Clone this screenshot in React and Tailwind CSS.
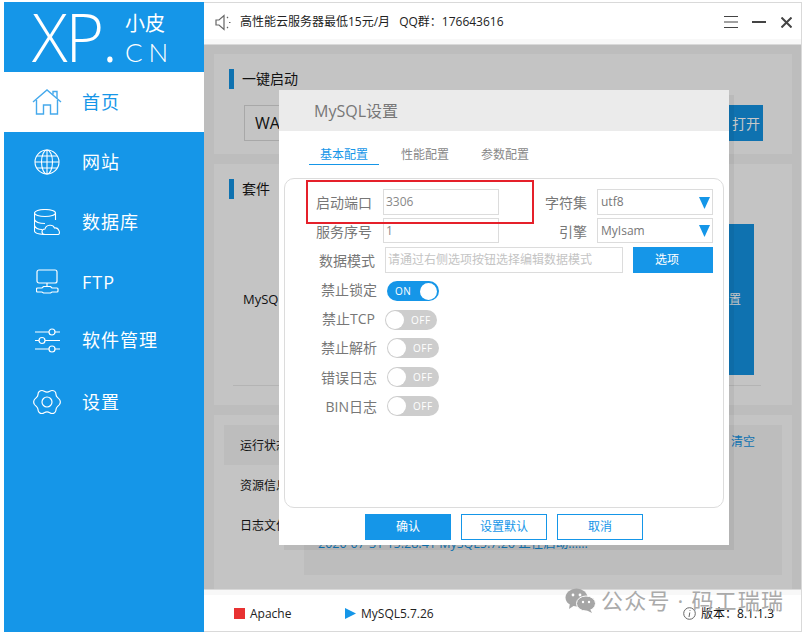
const FONT = "font-['Open_Sans','Noto_Sans_CJK_SC',sans-serif]";

function NavIcon({ name }) {
  const common = { fill: "none", stroke: "currentColor", strokeWidth: 1.1 };
  if (name === "home") return (
    <svg {...common} width="30" height="26" viewBox="0 0 30 26" strokeWidth="1.4" className="text-[#45a9ec]">
      <path d="M1 13 L15 1 L29 13" />
      <path d="M21 5.5 V2.5 H25 V9.5" />
      <path d="M4.5 11 V25 H11.5 V16 H18.5 V25 H25.5 V11" />
    </svg>
  );
  if (name === "globe") return (
    <svg {...common} width="26" height="26" viewBox="0 0 26 26">
      <circle cx="13" cy="13" r="12" />
      <ellipse cx="13" cy="13" rx="5.5" ry="12" />
      <path d="M13 1 V25 M1 13 H25 M3 7 H23 M3 19 H23" />
    </svg>
  );
  if (name === "db") return (
    <svg {...common} width="27" height="26" viewBox="0 0 27 26">
      <ellipse cx="11" cy="4" rx="10.5" ry="3.5" />
      <path d="M.5 4 V22 C.5 24 5 25.2 10 25.5 M21.5 4 V11 M.5 10.5 C1.5 13.5 7 14.5 11 14.5 M.5 16.5 C1.5 19.5 5 20.5 8 20.5" />
      <path d="M11 25.5 C7 25.5 7 20 11 20 C12 15.5 19 15 20.5 19 C25 18 27 25.5 24 25.5 Z" />
    </svg>
  );
  if (name === "ftp") return (
    <svg {...common} width="23" height="25" viewBox="0 0 23 25" strokeWidth="1.2">
      <rect x="1" y="1" width="20" height="13" rx="2" />
      <path d="M11 14 V17.5 M7.5 17.5 H14.5 L16 19 H21 A1 1 0 0 1 22 20 V22 A1 1 0 0 1 21 23 H16 L14.5 24 H7.5 L6 23 H1.5 A1 1 0 0 1 .5 22 V20 A1 1 0 0 1 1.5 19 H6 Z" />
    </svg>
  );
  if (name === "sliders") return (
    <svg {...common} width="25" height="25" viewBox="0 0 25 25" strokeWidth="1.2">
      <path d="M0 4 H14 M20 4 H25 M0 12.5 H4 M10 12.5 H25 M0 21 H14 M20 21 H25" />
      <circle cx="17" cy="4" r="3" />
      <circle cx="7" cy="12.5" r="3" />
      <circle cx="17" cy="21" r="3" />
    </svg>
  );
  return (
    <svg {...common} width="28" height="26" viewBox="0 0 28 26" strokeWidth="1.2">
      <path d="M9 1.5 C11 1.5 11.5 3.2 14 3.2 C16.5 3.2 17 1.5 19 1.5 C21 1.5 23 3 23 5.5 C23 8 25 8.5 26.5 10.5 C27.5 12 27.5 14 26.5 15.5 C25 17.5 23 18 23 20.5 C23 23 21 24.5 19 24.5 C17 24.5 16.5 22.8 14 22.8 C11.5 22.8 11 24.5 9 24.5 C7 24.5 5 23 5 20.5 C5 18 3 17.5 1.5 15.5 C.5 14 .5 12 1.5 10.5 C3 8.5 5 8 5 5.5 C5 3 7 1.5 9 1.5 Z" />
      <circle cx="14" cy="13" r="5" />
    </svg>
  );
}

const NAV = [
  ["home", "首页", true, ""],
  ["globe", "网站", false, ""],
  ["db", "数据库", false, "pb-[1px]"],
  ["ftp", "FTP", false, "pb-[1px]"],
  ["sliders", "软件管理", false, "pb-[4px]"],
  ["gear", "设置", false, ""],
];

function Sidebar() {
  return (
    <aside className="w-[200px] shrink-0 bg-[#1596e8] text-white">
      <div className="h-[70px] flex items-center pl-[28px]">
        <span className="text-[66px] leading-[70px] font-['Open_Sans',sans-serif] font-light tracking-[-2px] mt-[-3px] w-[91px]">XP.</span>
        <div className="ml-[2px] mt-[2px] flex flex-col">
          <span className="text-[20px] leading-[28px]">小皮</span>
          <span className="text-[26px] leading-[28px] tracking-[6px] font-['Lato',sans-serif] font-light">CN</span>
        </div>
      </div>
      {NAV.map(([icon, label, active, adjust]) => (
        <div key={label} className={`h-[60px] flex items-center ${adjust} ${active ? "bg-white text-[#1596e8]" : ""}`}>
          <div className="w-[78px] flex justify-center pl-[8px]"><NavIcon name={icon} /></div>
          <span className="text-[18px] tracking-[1px] leading-none">{label}</span>
        </div>
      ))}
    </aside>
  );
}

function TopBar() {
  return (
    <div className="h-[43px] shrink-0 bg-white border-y border-[#d9d9d9] shadow-[inset_0_-5px_0_#f8f8f8] flex items-center pb-[3px] pl-[11px] pr-[9px] text-[12px] text-[#222]">
      <svg width="16" height="17" viewBox="0 0 16 17" fill="none" stroke="#666" strokeWidth="1.2">
        <path d="M1 6 H4 L9 1.5 V15.5 L4 11 H1 Z" />
        <path d="M12 3 L13 4 M14 8.5 H15.5 M12 14 L13 13" />
      </svg>
      <span className="ml-[9px]">高性能云服务器最低15元/月</span>
      <span className="ml-[9px]">QQ群：176643616</span>
      <div className="ml-auto flex items-center">
        <svg width="14" height="12" viewBox="0 0 14 12" stroke="#444" strokeWidth="1"><path d="M0 .5 H14 M0 6 H14 M0 11.5 H14" /></svg>
        <div className="ml-[14px] w-[14px] h-[2px] bg-[#444]" />
        <svg className="ml-[15px]" width="11" height="11" viewBox="0 0 11 11" stroke="#444" strokeWidth="2"><path d="M.5 .5 L10.5 10.5 M10.5 .5 L.5 10.5" /></svg>
      </div>
    </div>
  );
}

function Heading({ children }) {
  return (
    <div className="flex items-center h-[20px]">
      <div className="w-[5px] h-[20px] bg-[#0f72b0]" />
      <span className="ml-[8px] mb-[2px] text-[14px] text-[#111]">{children}</span>
    </div>
  );
}

function Background() {
  return (
    <div className="flex-1 bg-[#bdbdbd] pt-[9px] pl-[10px] pr-[9px] flex flex-col gap-[10px] overflow-hidden">
      <section className="h-[100px] shrink-0 bg-[#c4c4c4] pl-[15px] pt-[15px]">
        <Heading>一键启动</Heading>
        <div className="mt-[16px] ml-[15px] flex">
          <div className="w-[486px] h-[36px] border border-[#a8a8a8] flex items-center pl-[10px] text-[16px] text-[#111]">WAMP</div>
          <div className="w-[34px] h-[36px] ml-[-1px] bg-[#0f72b0] flex items-center justify-end pr-[3px] text-[14px] text-[#c8c8c8]">打开</div>
        </div>
      </section>
      <section className="h-[241px] shrink-0 bg-[#c4c4c4] pl-[15px] pt-[15px] relative">
        <Heading>套件</Heading>
        <div className="flex mt-[25px]">
          <div className="w-[486px] h-[151px] flex items-center pl-[14px] text-[13px] text-[#111]">MySQL</div>
          <div className="w-[25px] h-[151px] ml-[14px] bg-[#0f72b0] flex items-center justify-end pr-[13px] text-[12px] text-[#c8c8c8]">置</div>
        </div>
        <div className="mt-[10px] mr-[31px] ml-[4px] border-t border-[#b4b4b4]" />
      </section>
      <section className="flex-1 bg-[#c4c4c4] px-[10px] pt-[10px] text-[12px] text-[#111]">
        <div className="h-[40px] pt-[2px] bg-[#bdbdbd] flex items-center pl-[16px] pr-[27px] justify-between">
          <span>运行状态</span>
          <span className="text-[#0f72b0] mb-[8px]">清空</span>
        </div>
        <div className="flex h-[110px]">
          <div className="w-[80px] pl-[16px]">
            <div className="h-[40px] pt-[2px] flex items-center">资源信息</div>
            <div className="h-[40px] pt-[2px] flex items-center">日志文件</div>
          </div>
          <div className="flex-1 bg-[#bdbdbd] pl-[14px] pt-[70px] text-[12.5px] leading-[18px] text-[#0f72b0]">2020-07-31 15:28:41 MySQL5.7.26 正在启动......</div>
        </div>
      </section>
    </div>
  );
}

function BottomBar() {
  return (
    <div className="h-[43px] shrink-0 bg-white border-y border-[#d9d9d9] shadow-[inset_0_5px_0_#f8f8f8] flex items-center pt-[6px] pl-[30px] pr-[27px] text-[12px] text-[#222]">
      <div className="w-[11px] h-[11px] bg-[#e83232]" />
      <span className="ml-[5px] w-[95px]">Apache</span>
      <svg width="11" height="11" viewBox="0 0 11 11" fill="#1596e8"><path d="M0 0 L11 5.5 L0 11 Z" /></svg>
      <span className="ml-[5px]">MySQL5.7.26</span>
      <div className="ml-auto flex items-center">
        <svg width="13" height="13" viewBox="0 0 13 13" fill="none" stroke="#666"><circle cx="6.5" cy="6.5" r="5.8" /><path d="M7 3 V3.8 M6.8 5.5 L6 10" /></svg>
        <span className="ml-[5px] text-[#111]">版本：8.1.1.3</span>
      </div>
    </div>
  );
}

function Field({ value, w = "w-[116px]", h = "h-[26px]", muted }) {
  return (
    <div className={`${w} ${h} border border-[#dcdcdc] flex items-center pl-[2px] text-[12px] ${muted ? "text-[#c4c4c4]" : "text-[#888]"}`}>{value}</div>
  );
}

function SelectBox({ value, h = "h-[26px]" }) {
  return (
    <div className={`w-[116px] ${h} border border-[#dcdcdc] flex items-center justify-between pl-[3px] pr-[2px] text-[12px] text-[#777]`}>
      <span>{value}</span>
      <svg width="11" height="13" viewBox="0 0 11 13" fill="#1596e8"><path d="M0 1 H11 L5.5 13 Z" /></svg>
    </div>
  );
}

function Toggle({ on }) {
  return on ? (
    <div className="w-[52px] h-[20px] rounded-full bg-[#1596e8] flex items-center justify-between pl-[8px] pr-[2px] text-[10px] tracking-[0.5px] text-white">
      ON
      <div className="w-[17px] h-[17px] rounded-full bg-white" />
    </div>
  ) : (
    <div className="w-[52px] h-[20px] rounded-full bg-[#cdcdcd] flex items-center pl-[1px] text-[10px] tracking-[0.5px] text-white">
      <div className="w-[18px] h-[18px] rounded-full bg-white" />
      <span className="ml-[7px]">OFF</span>
    </div>
  );
}

const TOGGLES = [
  ["禁止锁定", true, "w-[92px] mb-[4px]", "ml-[10px]", ""],
  ["禁止TCP", false, "w-[90px] mb-[4px]", "ml-[10px]", "mt-[9px]"],
  ["禁止解析", false, "w-[92px] mb-[2px]", "ml-[10px]", "mt-[8px]"],
  ["错误日志", false, "w-[92px]", "ml-[10px]", "mt-[9px]"],
  ["BIN日志", false, "w-[92px]", "ml-[10px]", "mt-[9px]"],
];

function Modal() {
  return (
    <div className="absolute left-[279px] top-[90px] w-[450px] h-[455px] bg-white shadow-[5px_5px_0_rgba(0,0,0,0.05)] flex flex-col">
      <div className="h-[41px] shrink-0 bg-[#ebebeb] flex items-center pl-[35px] text-[16px] text-[#777]">MySQL设置</div>
      <div className="flex h-[34px] shrink-0 pl-[30px] text-[12px] text-[#888]">
        <div className="w-[70px] border-b border-[#1596e8] text-[#1596e8] flex items-center justify-center pt-[14px]">基本配置</div>
        <div className="w-[80px] ml-[6px] flex items-center justify-center pt-[14px]">性能配置</div>
        <div className="w-[80px] flex items-center justify-center pt-[14px]">参数配置</div>
      </div>
      <div className="relative mx-[5px] mt-[13px] h-[330px] border border-[#dcdcdc] rounded-[10px] pt-[10px] text-[14px] text-[#777]">
        <div className="flex items-center h-[26px]">
          <span className="w-[87px] text-right">启动端口</span>
          <div className="ml-[11px]"><Field value="3306" /></div>
          <span className="w-[88px] text-right">字符集</span>
          <div className="ml-[10px]"><SelectBox value="utf8" /></div>
        </div>
        <div className="flex items-center h-[25px] mt-[3px]">
          <span className="w-[87px] text-right mt-[2px]">服务序号</span>
          <div className="ml-[11px]"><Field value="1" h="h-[25px]" /></div>
          <span className="w-[88px] text-right mt-[2px]">引擎</span>
          <div className="ml-[10px]"><SelectBox value="MyIsam" h="h-[25px]" /></div>
        </div>
        <div className="flex items-center h-[26px] mt-[4px]">
          <span className="w-[90px] text-right">数据模式</span>
          <div className="ml-[10px]"><Field w="w-[238px]" value="请通过右侧选项按钮选择编辑数据模式" muted /></div>
          <div className="ml-[10px] w-[80px] h-[26px] bg-[#1596e8] text-white text-[12px] flex items-center justify-center pr-[12px]">选项</div>
        </div>
        <div className="mt-[8px]">
          {TOGGLES.map(([label, on, labelClass, ml, mt]) => (
            <div key={label} className={`flex items-center h-[20px] ${mt}`}>
              <span className={`text-right ${labelClass}`}>{label}</span>
              <div className={ml}><Toggle on={on} /></div>
            </div>
          ))}
        </div>
        <div className="absolute left-[21px] top-[1px] w-[228px] h-[44px] border-2 border-[#e5202a]" />
      </div>
      <div className="flex gap-[10px] pl-[86px] mt-[6px] text-[12px]">
        <div className="w-[86px] h-[26px] bg-[#1596e8] text-white flex items-center justify-center">确认</div>
        <div className="w-[86px] h-[26px] border border-[#1596e8] text-[#1596e8] flex items-center justify-center">设置默认</div>
        <div className="w-[86px] h-[26px] border border-[#1596e8] text-[#1596e8] flex items-center justify-center">取消</div>
      </div>
    </div>
  );
}

function Watermark() {
  return (
    <div className="absolute left-[565px] top-[588px] flex items-center text-[#a6a6a6]">
      <svg width="31" height="25" viewBox="0 0 31 25" fill="#a6a6a6">
        <ellipse cx="11.5" cy="9.5" rx="11" ry="9" />
        <path d="M5 15 L4 21 L10 17 Z" />
        <ellipse cx="21" cy="15.5" rx="9.5" ry="7.5" stroke="#fff" strokeWidth="1" />
        <path d="M25 21 L27 25 L21 22 Z" />
        <circle cx="8" cy="7" r="1.4" fill="#fff" />
        <circle cx="15" cy="7" r="1.4" fill="#fff" />
        <circle cx="18" cy="14" r="1.2" fill="#fff" />
        <circle cx="24" cy="14" r="1.2" fill="#fff" />
      </svg>
      <span className="ml-[5px] mb-[2px] text-[22px] leading-none tracking-[1.2px] whitespace-nowrap opacity-95">公众号 · 码工瑞瑞</span>
    </div>
  );
}

export default function App() {
  return (
    <div className={`relative w-[808px] h-[634px] bg-white overflow-hidden pl-[4px] pr-[6px] pt-[2px] pb-[2px] ${FONT}`}>
      <div className="flex h-full">
        <Sidebar />
        <main className="flex-1 flex flex-col min-w-0 border-r border-[#d9d9d9]">
          <TopBar />
          <Background />
          <BottomBar />
        </main>
      </div>
      <Modal />
      <Watermark />
    </div>
  );
}
